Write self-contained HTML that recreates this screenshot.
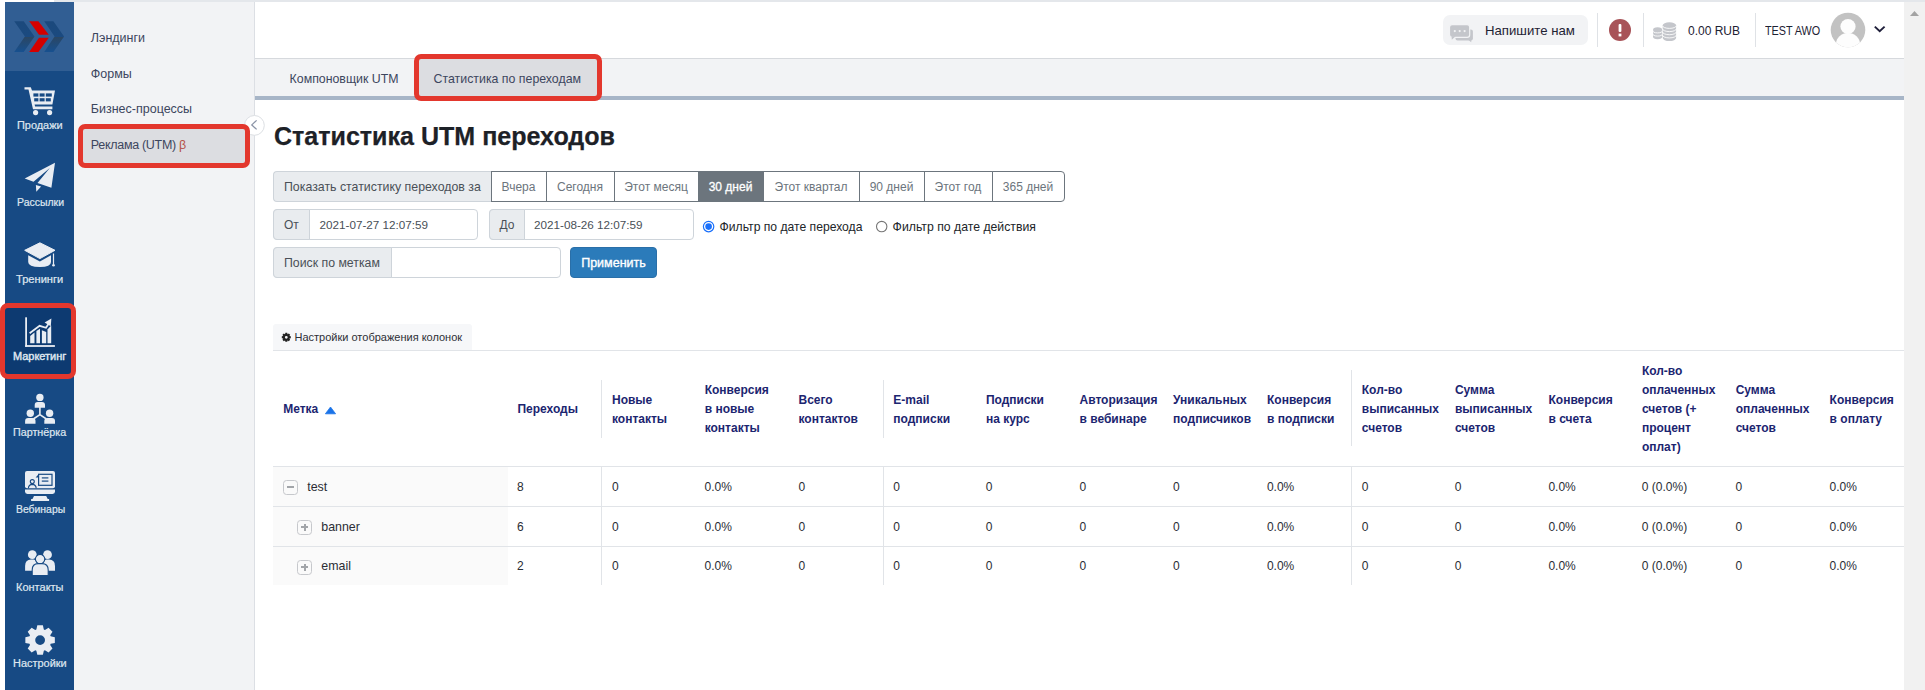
<!DOCTYPE html><html><head><meta charset="utf-8"><style>
html,body{margin:0;padding:0;width:1925px;height:690px;overflow:hidden;background:#fff;}
body{font-family:"Liberation Sans",sans-serif;position:relative;}
.t{position:absolute;white-space:nowrap;}
.b{position:absolute;}
</style></head><body>
<div class="b" style="left:54px;top:0px;width:1871px;height:2px;background:#e4e7eb;"></div>
<div class="b" style="left:5px;top:2px;width:69px;height:688px;background:#174a84;"></div>
<div class="b" style="left:5px;top:2px;width:69px;height:69px;background:#315e93;"></div>
<svg class="b" style="left:5px;top:2px" width="69" height="69" viewBox="5 2 69 69">
<defs>
<linearGradient id="lg1" x1="0" y1="0" x2="0" y2="1"><stop offset="0" stop-color="#1b497c"/><stop offset="0.5" stop-color="#1b4a80"/><stop offset="0.5" stop-color="#2b4662"/><stop offset="1" stop-color="#17508f"/></linearGradient>
</defs>
<path d="M14.2 21.2 L23.7 21.2 L34.5 36.4 L23.7 51.9 L14.2 51.9 L24.9 36.4 Z" fill="url(#lg1)"/>
<path d="M44.2 21.2 L53.4 21.2 L64.1 36.4 L53.4 51.9 L44.2 51.9 L54.6 36.4 Z" fill="url(#lg1)"/>
<path d="M29.2 21.2 L38.4 21.2 L48.8 34.8 L39.0 34.8 Z" fill="#d40000"/>
<path d="M39.0 37.8 L48.8 37.8 L38.4 51.9 L29.2 51.9 Z" fill="#d40000"/>
</svg>
<div class="b" style="left:5px;top:306px;width:69px;height:71px;background:#0d3a71;"></div>
<svg class="b" style="left:0;top:0" width="80" height="690" viewBox="0 0 80 690">
<g fill="#e9edf3" stroke="none">
<!-- cart -->
<path d="M24.5 87.2 h6.3 l1.2 3.2 h23 l-2.6 14.0 h-17.8 l0.5 2.2 h17.3 v2.6 h-19.4 l-4.5 -19.6 h-4.0 z"/>
<circle cx="35.6" cy="112.6" r="2.6"/><circle cx="49.6" cy="112.6" r="2.6"/>
</g>
<g fill="#174a84">
<rect x="33.4" y="93.4" width="5" height="3.2"/><rect x="39.6" y="93.4" width="5" height="3.2"/><rect x="45.8" y="93.4" width="6" height="3.2"/>
<rect x="34.2" y="98.2" width="4.2" height="3.2"/><rect x="39.6" y="98.2" width="5" height="3.2"/><rect x="45.8" y="98.2" width="5" height="3.2"/>
</g>
<!-- plane -->
<g fill="#e9edf3">
<path d="M55 162.8 L24.7 178.5 L33.5 181.7 L49.8 168.1 L37.5 182.9 L51.4 187.7 Z"/>
<path d="M35.9 184.9 L41.1 186.5 L36.3 191.7 Z"/>
</g>
<!-- grad cap -->
<g fill="#e9edf3">
<path d="M24.7 250.3 L39.9 242.8 L55 250.3 L39.9 258.6 Z" stroke="#e9edf3" stroke-width="1" stroke-linejoin="round"/>
<path d="M28.2 255.2 L39.9 261.6 L51 255.2 L51 262 Q51 267 39.9 267 Q28.2 267 28.2 262 Z"/>
<rect x="52.9" y="253.5" width="1.2" height="11"/>
<circle cx="53.5" cy="265.2" r="1.3"/>
</g>
<!-- marketing chart -->
<g fill="#e9edf3">
<rect x="25.2" y="317.3" width="1.8" height="29.6"/>
<rect x="25.2" y="345.1" width="29.7" height="1.8"/>
<path d="M30.2 336 L34.5 332.6 L34.5 343.2 L30.2 343.2 Z"/>
<path d="M36.4 331 L40 328.7 L40 343.2 L36.4 343.2 Z"/>
<path d="M41.9 330.2 L46.2 332 L46.2 343.2 L41.9 343.2 Z"/>
<path d="M47.5 329.4 L51.2 325.5 L51.2 343.2 L47.5 343.2 Z"/>
<path d="M29.6 333.2 L39.6 325.8 L46 327.8 L49.4 322.6" fill="none" stroke="#e9edf3" stroke-width="1.8"/>
<path d="M51.4 318.6 L44.6 322.6 L50.8 326.2 Z"/>
</g>
<!-- partner -->
<g fill="#e9edf3">
<circle cx="39.9" cy="397.4" r="3.7"/>
<path d="M34.7 407.8 L34.7 405 Q34.7 402 37.7 402 L42 402 Q45 402 45 405 L45 407.8 Z"/>
<circle cx="30.3" cy="413.3" r="3.7"/>
<path d="M25.1 423.7 L25.1 421 Q25.1 418 28.1 418 L32.5 418 Q35.5 418 35.5 421 L35.5 423.7 Z"/>
<circle cx="49.6" cy="413.3" r="3.7"/>
<path d="M44.3 423.7 L44.3 421 Q44.3 418 47.3 418 L52 418 Q55 418 55 421 L55 423.7 Z"/>
<path d="M39.9 407 L39.9 414.6 L33.4 419 M39.9 414.6 L46.4 419" fill="none" stroke="#e9edf3" stroke-width="1.6"/>
</g>
<!-- webinar -->
<g>
<rect x="25" y="470.9" width="30" height="17.4" rx="2" fill="#e9edf3"/>
<path d="M25 489.6 h30 v2 q0 2.4 -2.4 2.4 h-25.2 q-2.4 0 -2.4 -2.4 z" fill="#e9edf3"/>
<path d="M34 495.9 h12.2 l1.5 3.1 h1.4 v2 h-18 v-2 h1.4 z" fill="#e9edf3"/>
<rect x="38.6" y="474.3" width="13.4" height="11" fill="none" stroke="#174a84" stroke-width="1.2"/>
<path d="M38.6 474.3 L35.6 477.6 L38.6 477.6" fill="#174a84"/>
<rect x="41.8" y="477.3" width="6.6" height="1.2" fill="#174a84"/>
<rect x="41.8" y="480.5" width="6.6" height="1.2" fill="#174a84"/>
<circle cx="32.3" cy="481.6" r="2" fill="none" stroke="#174a84" stroke-width="1.1"/>
<path d="M28.4 488.3 Q28.6 484.6 32.3 484.4 Q36 484.6 36.2 488.3" fill="none" stroke="#174a84" stroke-width="1.1"/>
</g>
<!-- contacts -->
<g fill="#e9edf3">
<circle cx="32.3" cy="554.7" r="4.4"/>
<path d="M25.1 570.7 L25.1 566 Q25.1 559.5 31 559.5 L33.5 559.5 Q37 559.5 37 566 L37 570.7 Z"/>
<circle cx="47.5" cy="554.7" r="4.4"/>
<path d="M43 570.7 L43 566 Q43 559.5 46.5 559.5 L49 559.5 Q55 559.5 55 566 L55 570.7 Z"/>
</g>
<g fill="#e9edf3" stroke="#174a84" stroke-width="1.1">
<circle cx="40.1" cy="559.1" r="4.7"/>
<path d="M32.2 575.6 L32.2 570 Q32.2 563.6 38.2 563.6 L42 563.6 Q48.2 563.6 48.2 570 L48.2 575.6 Z"/>
</g>
<!-- gear -->
<g fill="#e9edf3">
<path d="M36.37 629.54 L37.32 625.36 L42.88 625.36 L43.83 629.54 L44.93 630.00 L48.55 627.71 L52.49 631.65 L50.20 635.27 L50.66 636.37 L54.84 637.32 L54.84 642.88 L50.66 643.83 L50.20 644.93 L52.49 648.55 L48.55 652.49 L44.93 650.20 L43.83 650.66 L42.88 654.84 L37.32 654.84 L36.37 650.66 L35.27 650.20 L31.65 652.49 L27.71 648.55 L30.00 644.93 L29.54 643.83 L25.36 642.88 L25.36 637.32 L29.54 636.37 L30.00 635.27 L27.71 631.65 L31.65 627.71 L35.27 630.00 Z M45.00 640.10 A4.9 4.9 0 1 0 35.20 640.10 A4.9 4.9 0 1 0 45.00 640.10 Z" fill-rule="evenodd"/>
</g>
</svg>
<div class="t" style="left:17.1px;top:120.6px;font-size:10px;line-height:10px;font-weight:400;-webkit-text-stroke:0.2px #dfe6ef;color:#dfe6ef;transform:scaleX(1.091);transform-origin:0 0;">Продажи</div>
<div class="t" style="left:16.5px;top:197.6px;font-size:10px;line-height:10px;font-weight:400;-webkit-text-stroke:0.2px #dfe6ef;color:#dfe6ef;transform:scaleX(1.047);transform-origin:0 0;">Рассылки</div>
<div class="t" style="left:16.3px;top:274.6px;font-size:10px;line-height:10px;font-weight:400;-webkit-text-stroke:0.2px #dfe6ef;color:#dfe6ef;transform:scaleX(1.111);transform-origin:0 0;">Тренинги</div>
<div class="t" style="left:13.3px;top:351.8px;font-size:10px;line-height:10px;font-weight:400;-webkit-text-stroke:0.4px #dfe6ef;color:#dfe6ef;transform:scaleX(1.095);transform-origin:0 0;">Маркетинг</div>
<div class="t" style="left:13.1px;top:428.2px;font-size:10px;line-height:10px;font-weight:400;-webkit-text-stroke:0.2px #dfe6ef;color:#dfe6ef;transform:scaleX(1.075);transform-origin:0 0;">Партнёрка</div>
<div class="t" style="left:15.5px;top:505.0px;font-size:10px;line-height:10px;font-weight:400;-webkit-text-stroke:0.2px #dfe6ef;color:#dfe6ef;transform:scaleX(1.040);transform-origin:0 0;">Вебинары</div>
<div class="t" style="left:15.9px;top:582.9px;font-size:10px;line-height:10px;font-weight:400;-webkit-text-stroke:0.2px #dfe6ef;color:#dfe6ef;transform:scaleX(1.100);transform-origin:0 0;">Контакты</div>
<div class="t" style="left:13.1px;top:658.5px;font-size:10px;line-height:10px;font-weight:400;-webkit-text-stroke:0.2px #dfe6ef;color:#dfe6ef;transform:scaleX(1.094);transform-origin:0 0;">Настройки</div>
<div class="b" style="left:74px;top:2px;width:180px;height:688px;background:#f2f3f5;border-right:1px solid #dcdfe4;"></div>
<div class="b" style="left:81px;top:128px;width:166px;height:36px;background:#dcdde1;"></div>
<div class="t" style="left:90.8px;top:32.1px;font-size:12.5px;line-height:12.5px;color:#3c465e;">Лэндинги</div>
<div class="t" style="left:90.8px;top:68.1px;font-size:12.5px;line-height:12.5px;color:#3c465e;">Формы</div>
<div class="t" style="left:90.8px;top:103.4px;font-size:12.5px;line-height:12.5px;color:#3c465e;">Бизнес-процессы</div>
<div class="t" style="left:90.8px;top:138.6px;font-size:12.5px;line-height:12.5px;color:#3c465e;letter-spacing:-0.3px;">Реклама (UTM) <span style="color:#b5534a">β</span></div>
<svg class="b" style="left:243px;top:114px" width="23" height="23" viewBox="0 0 23 23"><circle cx="11.4" cy="11.4" r="9.9" fill="#fff" stroke="#dcdfe3" stroke-width="1"/><path d="M13.6 6.4 L8.8 10.9 L13.6 15.4" fill="none" stroke="#8a93a6" stroke-width="1.3"/></svg>
<div class="b" style="left:255px;top:2px;width:1649px;height:56px;background:#fff;border-bottom:1px solid #d6d9dd;"></div>
<div class="b" style="left:1443px;top:15px;width:145px;height:30px;background:#f2f3f5;border-radius:7px;"></div>
<svg class="b" style="left:1448px;top:23px" width="27" height="21" viewBox="1448 23 27 21">
<rect x="1455.5" y="29.6" width="17.4" height="11" rx="2" fill="#c4c6cb"/>
<path d="M1468.5 40 L1471.2 42.2 L1471.5 39 Z" fill="#c4c6cb"/>
<rect x="1449.5" y="24.6" width="20.2" height="12.8" rx="2.6" fill="#c4c6cb" stroke="#f2f3f5" stroke-width="1.2"/>
<path d="M1451.6 36.3 L1451.8 39.8 L1455.6 36.3 Z" fill="#c4c6cb"/>
<circle cx="1454.8" cy="31.1" r="1.1" fill="#f2f3f5"/><circle cx="1459.7" cy="31.1" r="1.1" fill="#f2f3f5"/><circle cx="1464.6" cy="31.1" r="1.1" fill="#f2f3f5"/>
</svg>
<div class="t" style="left:1485.0px;top:23.7px;font-size:13.2px;line-height:13.2px;color:#1e2233;">Напишите нам</div>
<div class="b" style="left:1597px;top:13px;width:1px;height:34px;background:#dfe2e6;"></div>
<svg class="b" style="left:1608px;top:18px" width="24" height="24" viewBox="0 0 24 24"><circle cx="12" cy="12" r="11" fill="#a85358"/><rect x="10.6" y="6" width="2.8" height="8" rx="1" fill="#fff"/><rect x="10.6" y="15.6" width="2.8" height="2.8" fill="#fff"/></svg>
<div class="b" style="left:1643px;top:13px;width:1px;height:34px;background:#dfe2e6;"></div>
<svg class="b" style="left:1650px;top:20px" width="30" height="24" viewBox="1650 20 30 24"><path d="M1653.0 30.0 L1653.0 36.5 A4.6 2.7 0 0 0 1662.1999999999998 36.5 L1662.1999999999998 30.0 Z" fill="#c4c6cb"/><ellipse cx="1657.6" cy="30.0" rx="4.6" ry="2.7" fill="#c4c6cb"/><path d="M1652.7 30.2 A4.8999999999999995 2.7 0 0 0 1662.4999999999998 30.2" fill="none" stroke="#fff" stroke-width="0.85"/><path d="M1652.7 33.4 A4.8999999999999995 2.7 0 0 0 1662.4999999999998 33.4" fill="none" stroke="#fff" stroke-width="0.85"/><rect x="1662.2" y="22" width="0.9" height="20" fill="#fff"/><path d="M1662.7 25.2 L1662.7 38.1 A6.7 2.9 0 0 0 1676.1000000000001 38.1 L1676.1000000000001 25.2 Z" fill="#c4c6cb"/><ellipse cx="1669.4" cy="25.2" rx="6.7" ry="2.9" fill="#c4c6cb"/><path d="M1662.4 25.5 A7.0 2.9 0 0 0 1676.4 25.5" fill="none" stroke="#fff" stroke-width="0.85"/><path d="M1662.4 28.700000000000003 A7.0 2.9 0 0 0 1676.4 28.700000000000003" fill="none" stroke="#fff" stroke-width="0.85"/><path d="M1662.4 31.800000000000004 A7.0 2.9 0 0 0 1676.4 31.800000000000004" fill="none" stroke="#fff" stroke-width="0.85"/><path d="M1662.4 35.0 A7.0 2.9 0 0 0 1676.4 35.0" fill="none" stroke="#fff" stroke-width="0.85"/></svg>
<div class="t" style="left:1688.0px;top:24.5px;font-size:12px;line-height:12px;color:#1e2233;">0.00 RUB</div>
<div class="b" style="left:1755px;top:13px;width:1px;height:34px;background:#dfe2e6;"></div>
<div class="t" style="left:1765.0px;top:24.5px;font-size:12px;line-height:12px;color:#1e2233;transform:scaleX(0.9);transform-origin:0 0;">TEST AWO</div>
<svg class="b" style="left:1830px;top:12px" width="36" height="36" viewBox="0 0 36 36"><defs><clipPath id="av"><circle cx="18" cy="18" r="17.3"/></clipPath></defs><circle cx="18" cy="18" r="17.3" fill="#c2c2c2"/><g clip-path="url(#av)" fill="#fdfdfd"><circle cx="18" cy="14.5" r="7.6"/><ellipse cx="18" cy="32" rx="12" ry="11"/></g></svg>
<svg class="b" style="left:1872px;top:24px" width="15" height="10" viewBox="0 0 15 10"><path d="M2.8 2.6 L7.7 7.3 L12.6 2.6" fill="none" stroke="#1f1f3a" stroke-width="1.9"/></svg>
<div class="b" style="left:255px;top:59px;width:1649px;height:38px;background:#f2f3f5;"></div>
<div class="b" style="left:255px;top:96px;width:1649px;height:4px;background:#a7b5c7;"></div>
<div class="b" style="left:416px;top:59px;width:184px;height:38px;background:#dcdde1;"></div>
<div class="t" style="left:289.6px;top:73.1px;font-size:12.35px;line-height:12.35px;color:#3c465e;">Компоновщик UTM</div>
<div class="t" style="left:433.6px;top:73.1px;font-size:12.35px;line-height:12.35px;color:#3c465e;">Статистика по переходам</div>
<div class="t" style="left:274.0px;top:123.5px;font-size:25.5px;line-height:25.5px;font-weight:700;color:#1d2127;transform:scaleX(0.982);transform-origin:0 0;-webkit-text-stroke:0.25px #1d2127;">Статистика UTM переходов</div>
<div class="b" style="left:273px;top:171px;width:217px;height:29px;background:#e9ecef;border:1px solid #ced4da;border-right:none;border-radius:4px 0 0 4px;"></div>
<div class="t" style="left:284.0px;top:180.7px;font-size:12.35px;line-height:12.35px;color:#495057;">Показать статистику переходов за</div>
<div class="b" style="left:491.0px;top:171px;width:56.0px;height:31px;box-sizing:border-box;background:#fff;border:1px solid #6c757d;"></div>
<div class="t" style="left:491.0px;top:181.0px;width:55px;text-align:center;font-size:12px;line-height:12px;color:#6c757d;">Вчера</div>
<div class="b" style="left:546.0px;top:171px;width:69.0px;height:31px;box-sizing:border-box;background:#fff;border:1px solid #6c757d;"></div>
<div class="t" style="left:546.0px;top:181.0px;width:68px;text-align:center;font-size:12px;line-height:12px;color:#6c757d;">Сегодня</div>
<div class="b" style="left:614.0px;top:171px;width:85.0px;height:31px;box-sizing:border-box;background:#fff;border:1px solid #6c757d;"></div>
<div class="t" style="left:614.0px;top:181.0px;width:84px;text-align:center;font-size:12px;line-height:12px;color:#6c757d;">Этот месяц</div>
<div class="b" style="left:698.0px;top:171px;width:66.0px;height:31px;box-sizing:border-box;background:#6c757d;border:1px solid #6c757d;"></div>
<div class="t" style="left:698.0px;top:181.0px;width:65px;text-align:center;font-size:12px;line-height:12px;color:#fff;"><span style="-webkit-text-stroke:0.3px #fff">30 дней</span></div>
<div class="b" style="left:763.0px;top:171px;width:97.0px;height:31px;box-sizing:border-box;background:#fff;border:1px solid #6c757d;"></div>
<div class="t" style="left:763.0px;top:181.0px;width:96px;text-align:center;font-size:12px;line-height:12px;color:#6c757d;">Этот квартал</div>
<div class="b" style="left:859.0px;top:171px;width:66.0px;height:31px;box-sizing:border-box;background:#fff;border:1px solid #6c757d;"></div>
<div class="t" style="left:859.0px;top:181.0px;width:65px;text-align:center;font-size:12px;line-height:12px;color:#6c757d;">90 дней</div>
<div class="b" style="left:924.0px;top:171px;width:69.0px;height:31px;box-sizing:border-box;background:#fff;border:1px solid #6c757d;"></div>
<div class="t" style="left:924.0px;top:181.0px;width:68px;text-align:center;font-size:12px;line-height:12px;color:#6c757d;">Этот год</div>
<div class="b" style="left:992.0px;top:171px;width:73.0px;height:31px;box-sizing:border-box;background:#fff;border:1px solid #6c757d;border-radius:0 4px 4px 0;"></div>
<div class="t" style="left:992.0px;top:181.0px;width:72px;text-align:center;font-size:12px;line-height:12px;color:#6c757d;">365 дней</div>
<div class="b" style="left:273px;top:209px;width:204.5px;height:31px;box-sizing:border-box;background:#fff;border:1px solid #ced4da;border-radius:4px;"></div>
<div class="b" style="left:273px;top:209px;width:37px;height:31px;box-sizing:border-box;background:#e9ecef;border:1px solid #ced4da;border-radius:4px 0 0 4px;"></div>
<div class="t" style="left:284.0px;top:218.9px;font-size:12px;line-height:12px;color:#495057;">От</div>
<div class="t" style="left:319.5px;top:218.6px;font-size:11.7px;line-height:11.7px;color:#495057;">2021-07-27 12:07:59</div>
<div class="b" style="left:488.5px;top:209px;width:205.0px;height:31px;box-sizing:border-box;background:#fff;border:1px solid #ced4da;border-radius:4px;"></div>
<div class="b" style="left:488.5px;top:209px;width:36px;height:31px;box-sizing:border-box;background:#e9ecef;border:1px solid #ced4da;border-radius:4px 0 0 4px;"></div>
<div class="t" style="left:499.5px;top:218.9px;font-size:12px;line-height:12px;color:#495057;">До</div>
<div class="t" style="left:534.0px;top:218.6px;font-size:11.7px;line-height:11.7px;color:#495057;">2021-08-26 12:07:59</div>
<svg class="b" style="left:700px;top:218px" width="200" height="18" viewBox="700 218 200 18"><circle cx="708.6" cy="226.6" r="5.2" fill="#fff" stroke="#1a70fb" stroke-width="1.2"/><circle cx="708.6" cy="226.6" r="3.3" fill="#1a70fb"/><circle cx="881.7" cy="226.6" r="5.2" fill="#fff" stroke="#767676" stroke-width="1.1"/></svg>
<div class="t" style="left:719.6px;top:220.7px;font-size:12.15px;line-height:12.15px;color:#212529;">Фильтр по дате перехода</div>
<div class="t" style="left:892.6px;top:220.6px;font-size:12.25px;line-height:12.25px;color:#212529;">Фильтр по дате действия</div>
<div class="b" style="left:273px;top:247px;width:287.5px;height:31px;box-sizing:border-box;background:#fff;border:1px solid #ced4da;border-radius:4px;"></div>
<div class="b" style="left:273px;top:247px;width:118.5px;height:31px;box-sizing:border-box;background:#e9ecef;border:1px solid #ced4da;border-radius:4px 0 0 4px;"></div>
<div class="t" style="left:284.0px;top:256.7px;font-size:12.3px;line-height:12.3px;color:#495057;">Поиск по меткам</div>
<div class="b" style="left:570px;top:247px;width:87px;height:31px;box-sizing:border-box;background:#2b7bba;border:1px solid #2a6fa8;border-radius:4px;"></div>
<div class="t" style="left:581.2px;top:257.2px;font-size:12.5px;line-height:12.5px;color:#fff;-webkit-text-stroke:0.35px #fff;">Применить</div>
<div class="b" style="left:273px;top:324px;width:199px;height:26px;background:#f6f7f9;border-radius:3px 3px 0 0;"></div>
<svg class="b" style="left:281px;top:332px" width="11" height="11" viewBox="0 0 11 11"><path d="M4.03 2.15 L4.36 0.80 L6.24 0.80 L6.57 2.15 L6.63 2.17 L7.82 1.45 L9.15 2.78 L8.43 3.97 L8.45 4.03 L9.80 4.36 L9.80 6.24 L8.45 6.57 L8.43 6.63 L9.15 7.82 L7.82 9.15 L6.63 8.43 L6.57 8.45 L6.24 9.80 L4.36 9.80 L4.03 8.45 L3.97 8.43 L2.78 9.15 L1.45 7.82 L2.17 6.63 L2.15 6.57 L0.80 6.24 L0.80 4.36 L2.15 4.03 L2.17 3.97 L1.45 2.78 L2.78 1.45 L3.97 2.17 Z M6.70 5.30 A1.4 1.4 0 1 0 3.90 5.30 A1.4 1.4 0 1 0 6.70 5.30 Z" fill="#222" fill-rule="evenodd"/></svg>
<div class="t" style="left:294.5px;top:332.0px;font-size:11px;line-height:11px;color:#2d2f36;">Настройки отображения колонок</div>
<div class="b" style="left:273px;top:350px;width:1631px;height:1px;background:#e1e4e8;"></div>
<div class="b" style="left:273px;top:466px;width:235px;height:119px;background:#fafafa;"></div>
<div class="t" style="left:283.2px;top:403.4px;font-size:12px;line-height:12px;font-weight:700;color:#1c2570;">Метка</div>
<div class="t" style="left:517.4px;top:403.4px;font-size:12px;line-height:12px;font-weight:700;color:#1c2570;">Переходы</div>
<div class="t" style="left:612.0px;top:393.9px;font-size:12px;line-height:12px;font-weight:700;color:#1c2570;">Новые</div>
<div class="t" style="left:612.0px;top:412.9px;font-size:12px;line-height:12px;font-weight:700;color:#1c2570;">контакты</div>
<div class="t" style="left:704.7px;top:384.4px;font-size:12px;line-height:12px;font-weight:700;color:#1c2570;">Конверсия</div>
<div class="t" style="left:704.7px;top:403.4px;font-size:12px;line-height:12px;font-weight:700;color:#1c2570;">в новые</div>
<div class="t" style="left:704.7px;top:422.4px;font-size:12px;line-height:12px;font-weight:700;color:#1c2570;">контакты</div>
<div class="t" style="left:798.5px;top:393.9px;font-size:12px;line-height:12px;font-weight:700;color:#1c2570;">Всего</div>
<div class="t" style="left:798.5px;top:412.9px;font-size:12px;line-height:12px;font-weight:700;color:#1c2570;">контактов</div>
<div class="t" style="left:893.3px;top:393.9px;font-size:12px;line-height:12px;font-weight:700;color:#1c2570;">E-mail</div>
<div class="t" style="left:893.3px;top:412.9px;font-size:12px;line-height:12px;font-weight:700;color:#1c2570;">подписки</div>
<div class="t" style="left:985.9px;top:393.9px;font-size:12px;line-height:12px;font-weight:700;color:#1c2570;">Подписки</div>
<div class="t" style="left:985.9px;top:412.9px;font-size:12px;line-height:12px;font-weight:700;color:#1c2570;">на курс</div>
<div class="t" style="left:1079.5px;top:393.9px;font-size:12px;line-height:12px;font-weight:700;color:#1c2570;">Авторизация</div>
<div class="t" style="left:1079.5px;top:412.9px;font-size:12px;line-height:12px;font-weight:700;color:#1c2570;">в вебинаре</div>
<div class="t" style="left:1173.1px;top:393.9px;font-size:12px;line-height:12px;font-weight:700;color:#1c2570;">Уникальных</div>
<div class="t" style="left:1173.1px;top:412.9px;font-size:12px;line-height:12px;font-weight:700;color:#1c2570;">подписчиков</div>
<div class="t" style="left:1267.0px;top:393.9px;font-size:12px;line-height:12px;font-weight:700;color:#1c2570;">Конверсия</div>
<div class="t" style="left:1267.0px;top:412.9px;font-size:12px;line-height:12px;font-weight:700;color:#1c2570;">в подписки</div>
<div class="t" style="left:1361.8px;top:384.4px;font-size:12px;line-height:12px;font-weight:700;color:#1c2570;">Кол-во</div>
<div class="t" style="left:1361.8px;top:403.4px;font-size:12px;line-height:12px;font-weight:700;color:#1c2570;">выписанных</div>
<div class="t" style="left:1361.8px;top:422.4px;font-size:12px;line-height:12px;font-weight:700;color:#1c2570;">счетов</div>
<div class="t" style="left:1454.9px;top:384.4px;font-size:12px;line-height:12px;font-weight:700;color:#1c2570;">Сумма</div>
<div class="t" style="left:1454.9px;top:403.4px;font-size:12px;line-height:12px;font-weight:700;color:#1c2570;">выписанных</div>
<div class="t" style="left:1454.9px;top:422.4px;font-size:12px;line-height:12px;font-weight:700;color:#1c2570;">счетов</div>
<div class="t" style="left:1548.5px;top:393.9px;font-size:12px;line-height:12px;font-weight:700;color:#1c2570;">Конверсия</div>
<div class="t" style="left:1548.5px;top:412.9px;font-size:12px;line-height:12px;font-weight:700;color:#1c2570;">в счета</div>
<div class="t" style="left:1641.9px;top:365.4px;font-size:12px;line-height:12px;font-weight:700;color:#1c2570;">Кол-во</div>
<div class="t" style="left:1641.9px;top:384.4px;font-size:12px;line-height:12px;font-weight:700;color:#1c2570;">оплаченных</div>
<div class="t" style="left:1641.9px;top:403.4px;font-size:12px;line-height:12px;font-weight:700;color:#1c2570;">счетов (+</div>
<div class="t" style="left:1641.9px;top:422.4px;font-size:12px;line-height:12px;font-weight:700;color:#1c2570;">процент</div>
<div class="t" style="left:1641.9px;top:441.4px;font-size:12px;line-height:12px;font-weight:700;color:#1c2570;">оплат)</div>
<div class="t" style="left:1735.7px;top:384.4px;font-size:12px;line-height:12px;font-weight:700;color:#1c2570;">Сумма</div>
<div class="t" style="left:1735.7px;top:403.4px;font-size:12px;line-height:12px;font-weight:700;color:#1c2570;">оплаченных</div>
<div class="t" style="left:1735.7px;top:422.4px;font-size:12px;line-height:12px;font-weight:700;color:#1c2570;">счетов</div>
<div class="t" style="left:1829.6px;top:393.9px;font-size:12px;line-height:12px;font-weight:700;color:#1c2570;">Конверсия</div>
<div class="t" style="left:1829.6px;top:412.9px;font-size:12px;line-height:12px;font-weight:700;color:#1c2570;">в оплату</div>
<svg class="b" style="left:324px;top:405px" width="13" height="10" viewBox="0 0 13 10"><path d="M1.4 8.8 L6.5 2 L11.6 8.8 Z" fill="#1a73e8" stroke="#1a73e8" stroke-width="0.8" stroke-linejoin="round"/></svg>
<div class="b" style="left:601px;top:380px;width:1px;height:58px;background:#e1e4e8;"></div>
<div class="b" style="left:883px;top:380px;width:1px;height:58px;background:#e1e4e8;"></div>
<div class="b" style="left:1351px;top:370px;width:1px;height:76px;background:#e1e4e8;"></div>
<div class="b" style="left:273px;top:466px;width:1631px;height:1px;background:#e1e4e8;"></div>
<div class="b" style="left:273px;top:506px;width:1631px;height:1px;background:#e1e4e8;"></div>
<div class="b" style="left:273px;top:546px;width:1631px;height:1px;background:#e1e4e8;"></div>
<div class="b" style="left:601px;top:467px;width:1px;height:118px;background:#e1e4e8;"></div>
<div class="b" style="left:883px;top:467px;width:1px;height:118px;background:#e1e4e8;"></div>
<div class="b" style="left:1351px;top:467px;width:1px;height:118px;background:#e1e4e8;"></div>
<div class="b" style="left:283px;top:480px;width:15px;height:15px;box-sizing:border-box;border:1px solid #c6c8cc;border-radius:3.5px;background:#fafafa;"></div>
<div class="b" style="left:287px;top:486px;width:7px;height:2px;background:#a2a5a9;"></div>
<div class="t" style="left:307.2px;top:480.5px;font-size:12.4px;line-height:12.4px;color:#2a2d35;">test</div>
<div class="t" style="left:517.0px;top:480.8px;font-size:12px;line-height:12px;color:#2a2d35;">8</div>
<div class="t" style="left:611.9px;top:480.8px;font-size:12px;line-height:12px;color:#2a2d35;">0</div>
<div class="t" style="left:704.6px;top:480.8px;font-size:12px;line-height:12px;color:#2a2d35;">0.0%</div>
<div class="t" style="left:798.4px;top:480.8px;font-size:12px;line-height:12px;color:#2a2d35;">0</div>
<div class="t" style="left:893.2px;top:480.8px;font-size:12px;line-height:12px;color:#2a2d35;">0</div>
<div class="t" style="left:985.8px;top:480.8px;font-size:12px;line-height:12px;color:#2a2d35;">0</div>
<div class="t" style="left:1079.4px;top:480.8px;font-size:12px;line-height:12px;color:#2a2d35;">0</div>
<div class="t" style="left:1173.0px;top:480.8px;font-size:12px;line-height:12px;color:#2a2d35;">0</div>
<div class="t" style="left:1266.9px;top:480.8px;font-size:12px;line-height:12px;color:#2a2d35;">0.0%</div>
<div class="t" style="left:1361.7px;top:480.8px;font-size:12px;line-height:12px;color:#2a2d35;">0</div>
<div class="t" style="left:1454.8px;top:480.8px;font-size:12px;line-height:12px;color:#2a2d35;">0</div>
<div class="t" style="left:1548.4px;top:480.8px;font-size:12px;line-height:12px;color:#2a2d35;">0.0%</div>
<div class="t" style="left:1641.8px;top:480.8px;font-size:12px;line-height:12px;color:#2a2d35;">0 (0.0%)</div>
<div class="t" style="left:1735.6px;top:480.8px;font-size:12px;line-height:12px;color:#2a2d35;">0</div>
<div class="t" style="left:1829.5px;top:480.8px;font-size:12px;line-height:12px;color:#2a2d35;">0.0%</div>
<div class="b" style="left:297px;top:520px;width:15px;height:15px;box-sizing:border-box;border:1px solid #c6c8cc;border-radius:3.5px;background:#fafafa;"></div>
<div class="b" style="left:301px;top:526px;width:7px;height:2px;background:#a2a5a9;"></div>
<div class="b" style="left:303.5px;top:524px;width:2px;height:7px;background:#a2a5a9;"></div>
<div class="t" style="left:321.3px;top:520.5px;font-size:12.4px;line-height:12.4px;color:#2a2d35;">banner</div>
<div class="t" style="left:517.0px;top:520.8px;font-size:12px;line-height:12px;color:#2a2d35;">6</div>
<div class="t" style="left:611.9px;top:520.8px;font-size:12px;line-height:12px;color:#2a2d35;">0</div>
<div class="t" style="left:704.6px;top:520.8px;font-size:12px;line-height:12px;color:#2a2d35;">0.0%</div>
<div class="t" style="left:798.4px;top:520.8px;font-size:12px;line-height:12px;color:#2a2d35;">0</div>
<div class="t" style="left:893.2px;top:520.8px;font-size:12px;line-height:12px;color:#2a2d35;">0</div>
<div class="t" style="left:985.8px;top:520.8px;font-size:12px;line-height:12px;color:#2a2d35;">0</div>
<div class="t" style="left:1079.4px;top:520.8px;font-size:12px;line-height:12px;color:#2a2d35;">0</div>
<div class="t" style="left:1173.0px;top:520.8px;font-size:12px;line-height:12px;color:#2a2d35;">0</div>
<div class="t" style="left:1266.9px;top:520.8px;font-size:12px;line-height:12px;color:#2a2d35;">0.0%</div>
<div class="t" style="left:1361.7px;top:520.8px;font-size:12px;line-height:12px;color:#2a2d35;">0</div>
<div class="t" style="left:1454.8px;top:520.8px;font-size:12px;line-height:12px;color:#2a2d35;">0</div>
<div class="t" style="left:1548.4px;top:520.8px;font-size:12px;line-height:12px;color:#2a2d35;">0.0%</div>
<div class="t" style="left:1641.8px;top:520.8px;font-size:12px;line-height:12px;color:#2a2d35;">0 (0.0%)</div>
<div class="t" style="left:1735.6px;top:520.8px;font-size:12px;line-height:12px;color:#2a2d35;">0</div>
<div class="t" style="left:1829.5px;top:520.8px;font-size:12px;line-height:12px;color:#2a2d35;">0.0%</div>
<div class="b" style="left:297px;top:560px;width:15px;height:15px;box-sizing:border-box;border:1px solid #c6c8cc;border-radius:3.5px;background:#fafafa;"></div>
<div class="b" style="left:301px;top:566px;width:7px;height:2px;background:#a2a5a9;"></div>
<div class="b" style="left:303.5px;top:564px;width:2px;height:7px;background:#a2a5a9;"></div>
<div class="t" style="left:321.3px;top:559.5px;font-size:12.4px;line-height:12.4px;color:#2a2d35;">email</div>
<div class="t" style="left:517.0px;top:559.8px;font-size:12px;line-height:12px;color:#2a2d35;">2</div>
<div class="t" style="left:611.9px;top:559.8px;font-size:12px;line-height:12px;color:#2a2d35;">0</div>
<div class="t" style="left:704.6px;top:559.8px;font-size:12px;line-height:12px;color:#2a2d35;">0.0%</div>
<div class="t" style="left:798.4px;top:559.8px;font-size:12px;line-height:12px;color:#2a2d35;">0</div>
<div class="t" style="left:893.2px;top:559.8px;font-size:12px;line-height:12px;color:#2a2d35;">0</div>
<div class="t" style="left:985.8px;top:559.8px;font-size:12px;line-height:12px;color:#2a2d35;">0</div>
<div class="t" style="left:1079.4px;top:559.8px;font-size:12px;line-height:12px;color:#2a2d35;">0</div>
<div class="t" style="left:1173.0px;top:559.8px;font-size:12px;line-height:12px;color:#2a2d35;">0</div>
<div class="t" style="left:1266.9px;top:559.8px;font-size:12px;line-height:12px;color:#2a2d35;">0.0%</div>
<div class="t" style="left:1361.7px;top:559.8px;font-size:12px;line-height:12px;color:#2a2d35;">0</div>
<div class="t" style="left:1454.8px;top:559.8px;font-size:12px;line-height:12px;color:#2a2d35;">0</div>
<div class="t" style="left:1548.4px;top:559.8px;font-size:12px;line-height:12px;color:#2a2d35;">0.0%</div>
<div class="t" style="left:1641.8px;top:559.8px;font-size:12px;line-height:12px;color:#2a2d35;">0 (0.0%)</div>
<div class="t" style="left:1735.6px;top:559.8px;font-size:12px;line-height:12px;color:#2a2d35;">0</div>
<div class="t" style="left:1829.5px;top:559.8px;font-size:12px;line-height:12px;color:#2a2d35;">0.0%</div>
<div class="b" style="left:0px;top:303px;width:66px;height:66px;border:5px solid #e3372d;border-radius:8px;"></div>
<div class="b" style="left:78px;top:124px;width:162px;height:34px;border:5px solid #e3372d;border-radius:7px;"></div>
<div class="b" style="left:414px;top:54px;width:178px;height:37px;border:5px solid #e3372d;border-radius:7px;"></div>
<div class="b" style="left:1904px;top:2px;width:21px;height:688px;background:#f1f1f1;"></div>
<svg class="b" style="left:1904px;top:2px" width="21" height="20" viewBox="0 0 21 20"><path d="M6 14 L10.5 9 L15 14 Z" fill="#a3a3a3"/></svg>
</body></html>
